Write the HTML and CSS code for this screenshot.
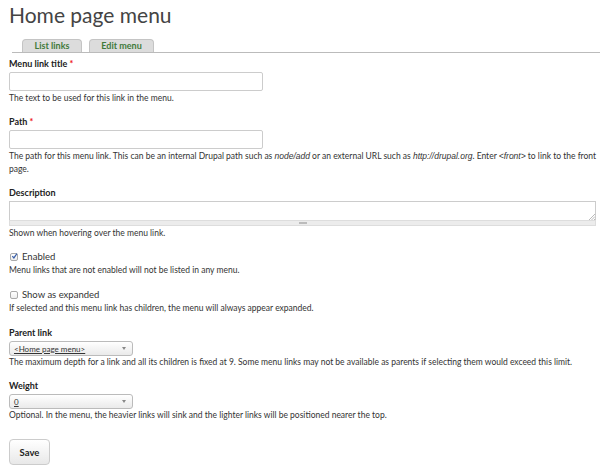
FILE: index.html
```html
<!DOCTYPE html>
<html>
<head>
<meta charset="utf-8">
<link rel="stylesheet" href="styles.css">
</head>
<body>
<div class="page">
  <h1 class="title">Home page menu</h1>
  <div class="tabs">
    <span class="tab">List links</span>
    <span class="tab">Edit menu</span>
  </div>
  <form class="form">
    <div class="item">
      <div class="label">Menu link title <span class="req">*</span></div>
      <div class="input"></div>
      <div class="desc">The text to be used for this link in the menu.</div>
    </div>
    <div class="item">
      <div class="label">Path <span class="req">*</span></div>
      <div class="input"></div>
      <div class="desc">The path for this menu link. This can be an internal Drupal path such as <em>node/add</em> or an external URL such as <em>http://drupal.org</em>. Enter <em>&lt;front&gt;</em> to link to the front page.</div>
    </div>
    <div class="item">
      <div class="label">Description</div>
      <div class="textarea">
        <svg class="resize" width="7" height="7" viewBox="0 0 7 7"><path d="M7 1L1 7M7 3.5L3.5 7M7 6L6 7" stroke="#aaa" stroke-width="0.8"/></svg>
      </div>
      <div class="grippie"><span class="grip"></span></div>
      <div class="desc">Shown when hovering over the menu link.</div>
    </div>
    <div class="item check-item">
      <div class="check-row">
        <span class="box checked"><svg width="8" height="8" viewBox="0 0 8 8"><path d="M1.5 4.2L3.3 6.2L6.8 1.2" fill="none" stroke="#3a5fa8" stroke-width="1.4"/></svg></span>
        <span class="check-label">Enabled</span>
      </div>
      <div class="desc">Menu links that are not enabled will not be listed in any menu.</div>
    </div>
    <div class="item check-item">
      <div class="check-row">
        <span class="box"></span>
        <span class="check-label">Show as expanded</span>
      </div>
      <div class="desc">If selected and this menu link has children, the menu will always appear expanded.</div>
    </div>
    <div class="item">
      <div class="label">Parent link</div>
      <div class="select"><span class="sel-text">&lt;Home page menu&gt;</span><span class="arrow"></span></div>
      <div class="desc tight">The maximum depth for a link and all its children is fixed at 9. Some menu links may not be available as parents if selecting them would exceed this limit.</div>
    </div>
    <div class="item">
      <div class="label">Weight</div>
      <div class="select"><span class="sel-text">0</span><span class="arrow"></span></div>
      <div class="desc tight">Optional. In the menu, the heavier links will sink and the lighter links will be positioned nearer the top.</div>
    </div>
    <div class="actions">
      <span class="button">Save</span>
    </div>
  </form>
</div>
</body>
</html>
```

FILE: styles.css
```css
html, body {
  margin: 0;
  padding: 0;
  background: #fff;
}
body {
  font-family: Lato, "Open Sans", sans-serif;
  color: #333;
}
.page {
  padding: 4px 0 0 9px;
}
.title {
  margin: 0;
  font-size: 21px;
  line-height: 22px;
  font-weight: normal;
  color: #444;
}
.tabs {
  margin: 13px 0 0 3px;
  padding-left: 10px;
  display: flex;
  gap: 7px;
  border-bottom: 1px solid #bbb;
  height: 13px;
}
.tab {
  display: block;
  height: 13px;
  box-sizing: border-box;
  padding: 0 10px;
  background: #dcdcdc;
  border: 1px solid #c4c4c4;
  border-bottom: none;
  border-radius: 4px 4px 0 0;
  font-size: 9px;
  line-height: 12px;
  font-weight: bold;
  color: #3f7a3a;
  width: 60px;
  text-align: center;
}
.tab + .tab {
  width: 65px;
}
.form {
  margin-top: 4px;
}
.item {
  margin-bottom: 10px;
}
.check-item {
  margin-bottom: 11px;
}
.label {
  font-size: 9px;
  line-height: 13px;
  font-weight: bold;
  color: #222;
  margin-bottom: 2px;
}
.req {
  color: #e11;
}
.input {
  width: 254px;
  height: 19px;
  box-sizing: border-box;
  border: 1px solid #ccc;
  border-radius: 2px;
  background: #fff;
}
.desc {
  font-size: 8.5px;
  line-height: 13px;
  color: #333;
  margin-top: 1px;
}
.desc.tight {
  margin-top: 0;
}
.desc em {
  font-family: "Liberation Sans", sans-serif;
  font-style: italic;
  font-size: 8.5px;
  line-height: 13px;
}
.textarea {
  width: 587px;
  height: 19px;
  box-sizing: border-box;
  border: 1px solid #ccc;
  border-bottom: none;
  position: relative;
}
.resize {
  position: absolute;
  right: 0;
  bottom: 0;
}
.grippie {
  width: 587px;
  height: 6px;
  box-sizing: border-box;
  background: #ececec;
  border: 1px solid #ddd;
  display: flex;
  justify-content: center;
  align-items: center;
}
.grip {
  width: 8px;
  height: 2px;
  border-top: 1px solid #bbb;
  border-bottom: 1px solid #bbb;
  box-sizing: border-box;
}
.check-row {
  display: flex;
  align-items: center;
  gap: 4px;
  height: 13px;
  padding-left: 1px;
}
.box {
  width: 8px;
  height: 8px;
  box-sizing: border-box;
  border: 1px solid #aaa;
  border-radius: 2px;
  background: linear-gradient(#fff, #eee);
  display: flex;
  align-items: center;
  justify-content: center;
}
.box svg {
  margin: -1px -1px 0 0;
}
.check-label {
  font-size: 9.5px;
  line-height: 13px;
  color: #333;
}
.select {
  width: 124px;
  height: 15px;
  box-sizing: border-box;
  border: 1px solid #bbb;
  border-radius: 3px;
  background: linear-gradient(#fff, #eaeaea);
  display: flex;
  align-items: center;
  justify-content: space-between;
  padding: 0 6px 0 4px;
}
.sel-text {
  font-size: 8px;
  line-height: 12px;
  text-decoration: underline;
  color: #333;
}
.arrow {
  width: 0;
  height: 0;
  border-left: 2.5px solid transparent;
  border-right: 2.5px solid transparent;
  border-top: 3px solid #888;
}
.actions {
  margin-top: 17px;
}
.button {
  display: inline-flex;
  align-items: center;
  justify-content: center;
  width: 41px;
  height: 26px;
  box-sizing: border-box;
  border: 1px solid #ccc;
  border-radius: 4px;
  background: linear-gradient(#fff, #e8e8e8);
  font-size: 9.5px;
  font-weight: bold;
  color: #222;
}
```
